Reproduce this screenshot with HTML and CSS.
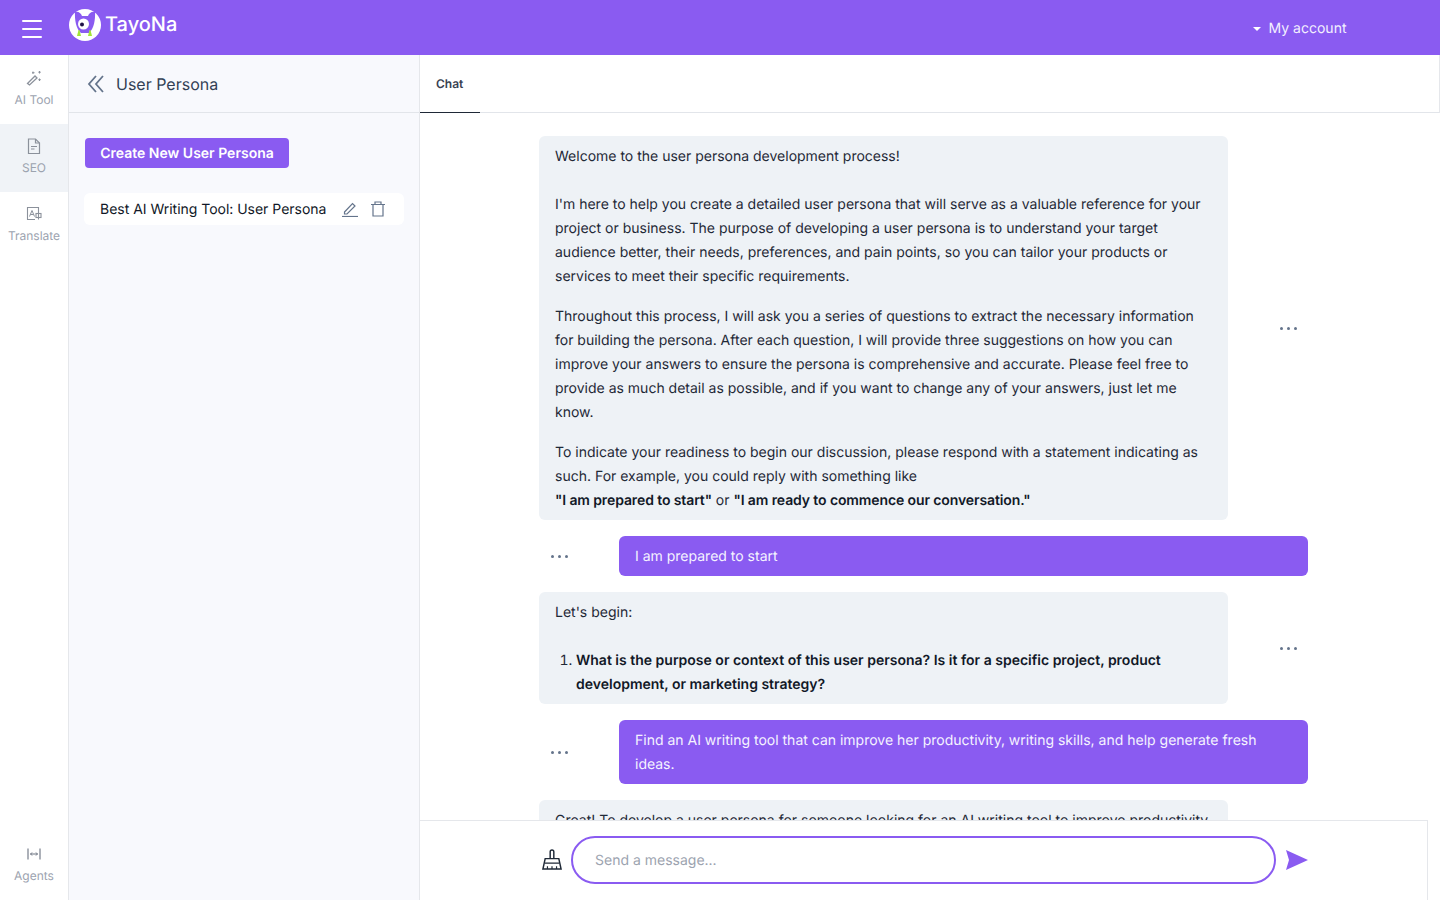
FILE: index.html
```html
<!DOCTYPE html>
<html lang="en">
<head>
<meta charset="utf-8">
<title>TayoNa</title>
<link rel="stylesheet" href="styles.css">
</head>
<body>
<header class="topbar">
  <button class="burger" aria-label="Menu"><span></span><span></span><span></span></button>
  <div class="brand">
    <svg class="logo" width="32" height="32" viewBox="0 0 32 32">
      <circle cx="16" cy="16" r="16" fill="#fff"/>
      <path d="M6 3 C9 2 12 4 13 7 L19 7 C20 4 23 2 26 3 C26.500 10 25 20 20 24 L12 24 C7 20 5.500 10 6 3Z" fill="#8a5bf1"/>
      <circle cx="14.500" cy="15" r="5.500" fill="#fff"/>
      <circle cx="13" cy="15.500" r="2" fill="#1f1147"/>
      <path d="M9.500 21 L10.500 21 L12 27 L8 27Z M20.500 21 L21.500 21 L23 27 L19 27Z" fill="#a3e635"/>
    </svg>
    <span class="brand-name">TayoNa</span>
  </div>
  <div class="account"><span class="caret"></span>My account</div>
</header>

<div class="shell">
  <nav class="rail">
    <a class="rail-item">
      <svg class="rail-icon" viewBox="0 0 16 16" width="16" height="16" fill="none" stroke="#8b919b" stroke-width="1.300"><path d="M1.500 13.500 L9 6 L11 8 L3.500 15Z"/><path d="M7 1.500v2.500M6 2.700h2.500M13.500 1v2.500M12.300 2.200h2.500M13.500 8.500v2.500M12.300 9.700h2.500" stroke-width="1"/></svg>
      <span>AI Tool</span>
    </a>
    <a class="rail-item active">
      <svg class="rail-icon" viewBox="0 0 16 16" width="16" height="16" fill="none" stroke="#8b919b" stroke-width="1.200"><path d="M2.500 1h7l4 4v10.500h-11z"/><path d="M9.500 1v4h4"/><path d="M5 8.500h6M5 11h3.500"/></svg>
      <span>SEO</span>
    </a>
    <a class="rail-item">
      <svg class="rail-icon" viewBox="0 0 16 16" width="16" height="16" fill="none" stroke="#8b919b" stroke-width="1.100"><path d="M12.500 6V1.500H1.500v12H9"/><path d="M3.500 10.500l2.500-6 2.500 6M4.500 8.500h3" stroke-width="1"/><rect x="10" y="7.500" width="5" height="4"/><path d="M12.500 6v7.500"/></svg>
      <span>Translate</span>
    </a>
    <a class="rail-item rail-bottom">
      <svg class="rail-icon" viewBox="0 0 16 16" width="16" height="16" fill="none" stroke="#6b7280" stroke-width="1.100"><path d="M2 2.500v11M14 2.500v11M4.500 8h7"/><path d="M6 6.500L4.500 8 6 9.500M10 6.500L11.500 8 10 9.500" stroke-width="1"/></svg>
      <span>Agents</span>
    </a>
  </nav>

  <aside class="panel">
    <div class="panel-head">
      <svg width="20" height="20" viewBox="0 0 20 20" fill="none" stroke="#64748b" stroke-width="1.800"><path d="M10 2 L3 10 L10 18M17 2 L10 10 L17 18"/></svg>
      <h1 class="panel-title">User Persona</h1>
    </div>
    <div class="panel-body">
      <button class="primary">Create New User Persona</button>
      <div class="persona">
        <span class="persona-name">Best AI Writing Tool: User Persona</span>
        <svg class="persona-edit" width="16" height="16" viewBox="0 0 16 16" fill="none" stroke="#64748b" stroke-width="1.200"><path d="M2.500 11 L10.500 2.500 L13 5 L5 13 L2.500 13Z"/><path d="M0 15.500h16"/></svg>
        <svg class="persona-del" width="16" height="16" viewBox="0 0 16 16" fill="none" stroke="#64748b" stroke-width="1.200"><path d="M1 3.500h14M5 3.500V1h6v2.500M3 3.500V15h10V3.500"/></svg>
      </div>
    </div>
  </aside>

  <main class="main">
    <div class="tabs"><a class="tab">Chat</a></div>
    <div class="chat">
      <div class="thread">
        <section class="row">
          <div class="bubble bot">
            <p>Welcome to the user persona development process!<br><br>I'm here to help you create a detailed user persona that will serve as a valuable reference for your project or business. The purpose of developing a user persona is to understand your target audience better, their needs, preferences, and pain points, so you can tailor your products or services to meet their specific requirements.</p>
            <p>Throughout this process, I will ask you a series of questions to extract the necessary information for building the persona. After each question, I will provide three suggestions on how you can improve your answers to ensure the persona is comprehensive and accurate. Please feel free to provide as much detail as possible, and if you want to change any of your answers, just let me know.</p>
            <p class="cta">To indicate your readiness to begin our discussion, please respond with a statement indicating as such. For example, you could reply with something like<br><strong>"I am prepared to start"</strong> or <strong>"I am ready to commence our conversation."</strong></p>
          </div>
          <div class="dots dots-right"><i></i><i></i><i></i></div>
        </section>
        <section class="row user">
          <div class="dots dots-left"><i></i><i></i><i></i></div>
          <div class="bubble mine">I am prepared to start</div>
        </section>
        <section class="row">
          <div class="bubble bot">
            <p>Let's begin:<br><br></p>
            <ol><li><strong>What is the purpose or context of this user persona? Is it for a specific project, product development, or marketing strategy?</strong></li></ol>
          </div>
          <div class="dots dots-right"><i></i><i></i><i></i></div>
        </section>
        <section class="row user">
          <div class="dots dots-left"><i></i><i></i><i></i></div>
          <div class="bubble mine">Find an AI writing tool that can improve her productivity, writing skills, and help generate fresh ideas.</div>
        </section>
        <section class="row">
          <div class="bubble bot">
            <p>Great! To develop a user persona for someone looking for an AI writing tool to improve productivity, writing skills, and generate fresh ideas, I need some more details.</p>
          </div>
        </section>
      </div>
    </div>
    <div class="composer">
      <svg class="broom" width="20" height="24" viewBox="0 0 22 24" fill="none" stroke="#1f2937" stroke-width="1.600"><path d="M9 10V3a2 2 0 0 1 4 0v7"/><path d="M3.500 10.500h15L21 22H1z"/><path d="M6 22v-3M11 22v-3M16 22v-3M3 15.500h16" stroke-width="1.300"/></svg>
      <input class="message" type="text" placeholder="Send a message...">
      <svg class="send" width="22" height="20" viewBox="0 0 22 20"><path d="M0 0 L22 10 L0 20 L3 10Z" fill="#8a5bf1"/></svg>
    </div>
  </main>
</div>
</body>
</html>
```
FILE: styles.css
```css
* { box-sizing: border-box; }
html, body { margin: 0; height: 100%; overflow: hidden; }
body { font-family: Inter, "Liberation Sans", sans-serif; font-size: 14px; line-height: 24px; color: #111827; background: #fff; display: flex; flex-direction: column; height: 900px; text-rendering: geometricPrecision; }

.topbar { height: 55px; flex: none; background: #8a5bf1; display: flex; align-items: center; color: #fff; }
.burger { width: 20px; height: 18px; margin: 2px 0 0 22px; padding: 0; border: 0; background: none; display: flex; flex-direction: column; justify-content: space-between; }
.burger span { height: 2px; background: #fff; display: block; border-radius: 1px; }
.brand { display: flex; align-items: center; margin: -6px 0 0 27px; gap: 4px; }
.logo { display: block; }
.brand-name { font-size: 20px; font-weight: 500; line-height: 28px; margin-top: -2px; }
.account { margin-left: auto; margin-right: 93.5px; margin-top: 2px; display: flex; align-items: center; font-size: 14px; padding-top: 1px; color: #f3f0ff; }
.caret { width: 0; height: 0; border: 4px solid transparent; border-top: 4px solid #fff; border-bottom: 0; margin-right: 8px; }

.shell { flex: 1; display: flex; min-height: 0; }
.rail { width: 69px; flex: none; border-right: 1px solid #e5e7eb; display: flex; flex-direction: column; background: #fff; }
.rail-item { height: 68px; display: flex; flex-direction: column; align-items: center; padding-top: 13px; gap: 2px; font-size: 12px; line-height: 24px; color: #9ca3af; }
.rail-item:first-child { height: 69px; padding-top: 14px; }
.rail-icon { display: block; height: 16px; margin-top: 1px; }
.rail-item.active { background: #f0f3f7; }
.rail-bottom { margin-top: auto; color: #9ca3af; }

.panel { width: 351px; flex: none; background: #f8f9fd; border-right: 1px solid #e5e7eb; display: flex; flex-direction: column; }
.panel-head { height: 58px; flex: none; border-bottom: 1px solid #e2e5ea; display: flex; align-items: center; padding-left: 17px; gap: 10px; }
.panel-title { margin: 0; font-size: 16px; font-weight: 400; color: #334155; }
.panel-body { padding: 25px 15px 0 15px; }
.primary { display: block; height: 30px; width: 204px; margin-left: 1px; padding: 2px 0 0; border: 0; border-radius: 4px; background: #8a5bf1; color: #fff; font: 600 14px/20px Inter, "Liberation Sans", sans-serif; text-rendering: geometricPrecision; }
.persona { margin-top: 25px; height: 32px; background: #fff; border-radius: 6px; display: flex; align-items: center; padding-left: 16px; }
.persona-name { font-size: 14px; color: #111827; white-space: nowrap; letter-spacing: -0.02px; padding-top: 2px; }
.persona-edit { margin-left: 16px; }
.persona-del { margin-left: 12px; }

.main { flex: 1; min-width: 0; display: flex; flex-direction: column; }
.tabs { height: 58px; flex: none; border-bottom: 1px solid #e2e5ea; border-right: 1px solid #e5e7eb; display: flex; }
.tab { width: 60px; height: 58px; border-bottom: 1px solid #1f2937; padding-left: 16px; font-size: 12px; font-weight: 600; line-height: 58px; color: #374151; }
.chat { flex: 1; min-height: 0; overflow: hidden; padding-right: 13px; }
.thread { width: 769px; margin: 23px auto 0; display: flex; flex-direction: column; gap: 16px; }
.row { display: flex; align-items: center; justify-content: flex-start; }
.row.user { justify-content: flex-end; }
.bubble { width: 689px; flex: none; padding: 9px 16px 7px; border-radius: 6px; }
.bubble p { margin: 0 0 16px; }
.bubble p:last-child { margin: 0; }
.bot { background: #eef2f6; color: #1f2937; }
.mine { background: #8a5bf1; color: #f5f3ff; }
.bubble strong { font-weight: 600; color: #111827; }
.bubble .cta strong { letter-spacing: -0.11px; }
.bubble p:first-child:has(+ ol) { margin: 0; }
.bubble ol { margin: 0; padding-left: 21px; }
.dots { display: flex; gap: 4px; align-items: center; }
.dots i { width: 3px; height: 3px; border-radius: 50%; background: #64748b; display: block; }
.dots-right { margin-left: 52px; }
.dots-left { margin-right: 51px; }

.composer { height: 80px; flex: none; width: 1008px; border: 1px solid #e5e7eb; border-left: 0; border-bottom: 0; background: #fff; display: flex; align-items: center; padding: 0 0 2px 122px; }
.broom { flex: none; }
.message { width: 705px; height: 48px; margin-left: 9px; border: 2px solid #8a5bf1; border-radius: 24px; padding: 2px 22px 0; font: 14px/20px Inter, "Liberation Sans", sans-serif; text-rendering: geometricPrecision; outline: 0; background: #fff; color: #111827; }
.message::placeholder { color: #9ca3af; opacity: 1; }
.send { margin-left: 10px; flex: none; }
```
